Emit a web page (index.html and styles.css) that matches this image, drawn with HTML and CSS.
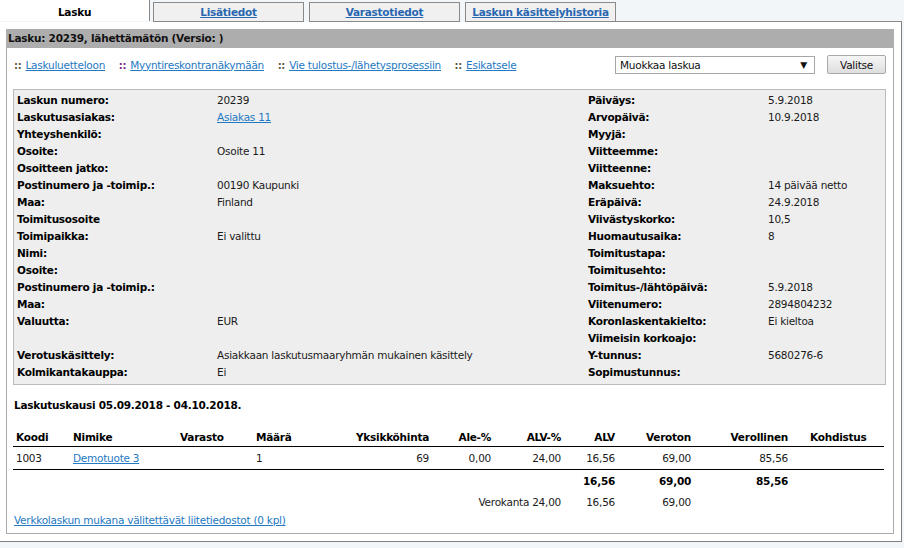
FILE: index.html
```html
<!DOCTYPE html>
<html>
  <head>
    <title>Lasku 20239</title>
    <link rel="stylesheet" href="styles.css">
  </head>
  <body>
    <div class="tabs">
      <div class="tab active">Lasku</div>
      <a class="tab first" href="#">Lisätiedot</a>
      <a class="tab" href="#">Varastotiedot</a>
      <a class="tab" href="#">Laskun käsittelyhistoria</a>
      <div class="tab-fill"></div>
    </div>

    <div class="frame">
      <div class="panel">
        <div class="panel-head">Lasku: 20239, lähettämätön (Versio: )</div>
        <div class="panel-body">

          <div class="toolbar">
            <div class="nav">
              <span class="sep">::</span><a href="#">Laskuluetteloon</a>
              <span class="sep visited">::</span><a href="#">Myyntireskontranäkymään</a>
              <span class="sep">::</span><a href="#">Vie tulostus-/lähetysprosessiin</a>
              <span class="sep">::</span><a href="#">Esikatsele</a>
            </div>
            <div class="select"><span>Muokkaa laskua</span><span class="arrow">▼</span></div>
            <button class="btn">Valitse</button>
          </div>

          <div class="info">
            <div class="lbl">Laskun numero:</div><div>20239</div>
            <div class="lbl">Päiväys:</div><div>5.9.2018</div>

            <div class="lbl">Laskutusasiakas:</div><div><a href="#">Asiakas 11</a></div>
            <div class="lbl">Arvopäivä:</div><div>10.9.2018</div>

            <div class="lbl">Yhteyshenkilö:</div><div></div>
            <div class="lbl">Myyjä:</div><div></div>

            <div class="lbl">Osoite:</div><div>Osoite 11</div>
            <div class="lbl">Viitteemme:</div><div></div>

            <div class="lbl">Osoitteen jatko:</div><div></div>
            <div class="lbl">Viitteenne:</div><div></div>

            <div class="lbl">Postinumero ja -toimip.:</div><div>00190 Kaupunki</div>
            <div class="lbl">Maksuehto:</div><div>14 päivää netto</div>

            <div class="lbl">Maa:</div><div>Finland</div>
            <div class="lbl">Eräpäivä:</div><div>24.9.2018</div>

            <div class="lbl">Toimitusosoite</div><div></div>
            <div class="lbl">Viivästyskorko:</div><div>10,5</div>

            <div class="lbl">Toimipaikka:</div><div>Ei valittu</div>
            <div class="lbl">Huomautusaika:</div><div>8</div>

            <div class="lbl">Nimi:</div><div></div>
            <div class="lbl">Toimitustapa:</div><div></div>

            <div class="lbl">Osoite:</div><div></div>
            <div class="lbl">Toimitusehto:</div><div></div>

            <div class="lbl">Postinumero ja -toimip.:</div><div></div>
            <div class="lbl">Toimitus-/lähtöpäivä:</div><div>5.9.2018</div>

            <div class="lbl">Maa:</div><div></div>
            <div class="lbl">Viitenumero:</div><div>2894804232</div>

            <div class="lbl">Valuutta:</div><div>EUR</div>
            <div class="lbl">Koronlaskentakielto:</div><div>Ei kieltoa</div>

            <div></div><div></div>
            <div class="lbl">Viimeisin korkoajo:</div><div></div>

            <div class="lbl">Verotuskäsittely:</div><div>Asiakkaan laskutusmaaryhmän mukainen käsittely</div>
            <div class="lbl">Y-tunnus:</div><div>5680276-6</div>

            <div class="lbl">Kolmikantakauppa:</div><div>Ei</div>
            <div class="lbl">Sopimustunnus:</div><div></div>
          </div>

          <div class="period">Laskutuskausi 05.09.2018 - 04.10.2018.</div>

          <table class="rows">
            <colgroup>
              <col style="width:57px"><col style="width:107px"><col style="width:76px">
              <col style="width:86px"><col style="width:94px"><col style="width:62px">
              <col style="width:70px"><col style="width:54px"><col style="width:76px">
              <col style="width:97px"><col style="width:92px">
            </colgroup>
            <thead>
              <tr>
                <th>Koodi</th>
                <th>Nimike</th>
                <th>Varasto</th>
                <th>Määrä</th>
                <th class="num">Yksikköhinta</th>
                <th class="num">Ale-%</th>
                <th class="num">ALV-%</th>
                <th class="num">ALV</th>
                <th class="num">Veroton</th>
                <th class="num">Verollinen</th>
                <th class="target">Kohdistus</th>
              </tr>
            </thead>
            <tbody>
              <tr class="item">
                <td>1003</td>
                <td><a href="#">Demotuote 3</a></td>
                <td></td>
                <td>1</td>
                <td class="num">69</td>
                <td class="num">0,00</td>
                <td class="num">24,00</td>
                <td class="num">16,56</td>
                <td class="num">69,00</td>
                <td class="num">85,56</td>
                <td></td>
              </tr>
              <tr class="total">
                <td colspan="7"></td>
                <td class="num">16,56</td>
                <td class="num">69,00</td>
                <td class="num">85,56</td>
                <td></td>
              </tr>
              <tr class="rate">
                <td colspan="3"></td>
                <td class="num" colspan="4">Verokanta 24,00</td>
                <td class="num">16,56</td>
                <td class="num">69,00</td>
                <td colspan="2"></td>
              </tr>
            </tbody>
          </table>

          <div class="attach"><a href="#">Verkkolaskun mukana välitettävät liitetiedostot (0 kpl)</a></div>
        </div>
      </div>
    </div>
  </body>
</html>
```

FILE: styles.css
```css
body {
  margin: 0;
  background: #f3f6f9;
  font-family: "DejaVu Sans", Verdana, sans-serif;
  font-size: 10.5px;
  letter-spacing: -0.25px;
  color: #1a1a1a;
}
a {
  color: #2479c3;
}

/* tabs */
.tabs {
  display: flex;
  width: 902px;
  padding-top: 2px;
}
.tab {
  display: block;
  height: 18px;
  line-height: 18px;
  text-align: center;
  font-weight: bold;
  white-space: nowrap;
  box-sizing: border-box;
}
.tab.active {
  width: 150px;
  margin-top: -2px;
  height: 21px;
  line-height: 24px;
  background: #fff;
  color: #000;
  border-right: 1px solid #888;
}
a.tab {
  width: 151px;
  height: 20px;
  margin-left: 5px;
  background: #f0f0f0;
  border: 1px solid #8a8a8a;
  color: #2867b0;
}
a.tab.first {
  margin-left: 3px;
}
.tab-fill {
  flex: 1;
  border-bottom: 1px solid #8a8a8a;
}

/* frame */
.frame {
  width: 902px;
  box-sizing: border-box;
  background: #fff;
  border-right: 1px solid #808080;
  border-bottom: 1px solid #808080;
  padding: 7px 7px 7px 6px;
}
.panel {
  border: 1px solid #aaa;
  border-top: none;
}
.panel-head {
  background: #adadad;
  height: 19px;
  line-height: 19px;
  padding-left: 2px;
  font-weight: bold;
  color: #111;
  margin-left: -1px;
  margin-right: -1px;
}
.panel-body {
  padding: 0 7px 4px 6px;
}

/* toolbar */
.toolbar {
  display: flex;
  align-items: center;
  height: 19px;
  margin-top: 7px;
  margin-bottom: 15px;
}
.nav {
  flex: 1;
  padding-left: 1px;
}
.nav .sep {
  color: #5a5a3a;
  font-weight: bold;
  margin-right: 4px;
  margin-left: 10.5px;
  font-size: 10px;
}
.nav .sep:first-child {
  margin-left: 0;
}
.nav .sep.visited {
  color: #7a2a7a;
}
.select {
  display: flex;
  align-items: center;
  justify-content: space-between;
  width: 200px;
  height: 18px;
  box-sizing: border-box;
  border: 1px solid #a6a6a6;
  background: #fff;
  padding: 0 7px 0 4px;
  color: #111;
}
.select .arrow {
  font-size: 9px;
  color: #111;
}
.btn {
  margin-left: 12px;
  width: 59px;
  height: 19px;
  padding: 0;
  border: 1px solid #a9a9a9;
  border-radius: 2px;
  background: linear-gradient(#f6f6f6, #dedede);
  font-family: "DejaVu Sans", Verdana, sans-serif;
  font-size: 10.5px;
  letter-spacing: -0.25px;
  color: #111;
}

/* info box */
.info {
  display: grid;
  grid-template-columns: 200px 371px 180px 1fr;
  grid-auto-rows: 17px;
  background: #eee;
  border: 1px solid #bbb;
  padding: 2px 0 3px;
}
.info > div {
  padding-left: 3px;
  line-height: 17px;
  white-space: nowrap;
}
.info .lbl {
  font-weight: bold;
  color: #000;
}

.period {
  font-weight: bold;
  color: #000;
  line-height: 17px;
  margin-top: 12px;
  padding-left: 1px;
}

/* rows */
table.rows {
  width: 871px;
  table-layout: fixed;
  border-collapse: collapse;
  margin-top: 13px;
}
.rows th {
  text-align: left;
  font-weight: bold;
  color: #000;
  height: 19px;
  padding: 0 3px;
  border-bottom: 1px solid #000;
}
.rows td {
  padding: 0 3px;
  height: 21px;
  white-space: nowrap;
}
.rows .num {
  text-align: right;
  padding-right: 4px;
}
.rows th.target {
  padding-left: 18px;
}
.rows tr.item td {
  height: 22px;
  border-bottom: 1px solid #000;
}
.rows tr.total td {
  font-weight: bold;
  color: #000;
  height: 21px;
}
.rows tr.rate td {
  height: 21px;
}

.attach {
  line-height: 17px;
  margin-top: 0;
  padding-left: 1px;
}
```
